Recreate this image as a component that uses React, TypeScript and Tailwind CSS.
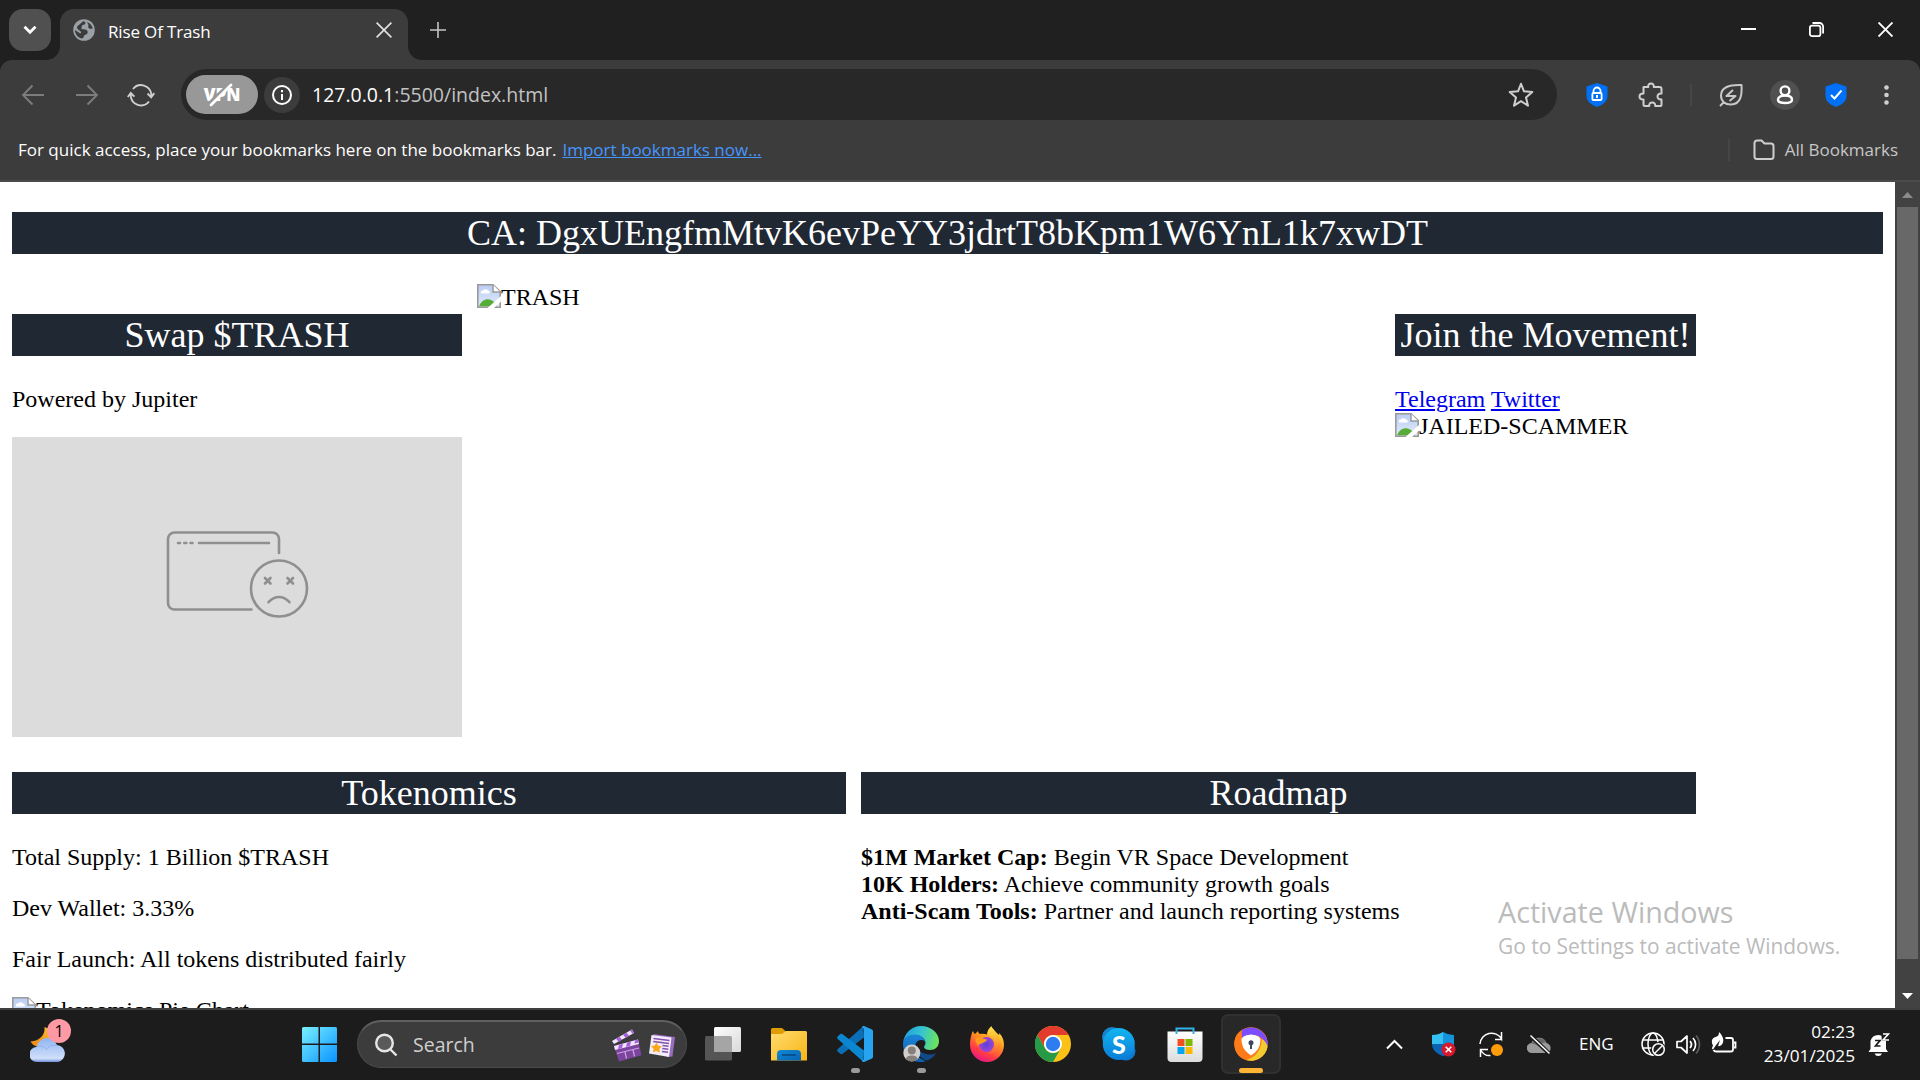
import React from "react";

function BrokenImage({ alt }: { alt: string }) {
  return (
    <span className="flex h-[27px] items-start leading-[27px] whitespace-nowrap">
      <svg width="24" height="24" viewBox="0 0 24 24" className="shrink-0">
        <defs>
          <linearGradient id="sky" x1="0" y1="0" x2="0" y2="1">
            <stop offset="0" stopColor="#b9cdf3" />
            <stop offset="1" stopColor="#e1eafb" />
          </linearGradient>
        </defs>
        <path d="M.8.8H16L23.2 7.500V23.200H.8Z" fill="url(#sky)" />
        <path d="M4 9.500a2 2 0 0 1 2-3 3 3 0 0 1 5 0 2 2 0 0 1 1.500 3Z" fill="#fff" />
        <path d="M2 22.500C5 14.500 13 13 18 19L20 22.500Z" fill="#55ad38" />
        <path d="M.8 23.200V.8H16L23.200 7.500V23.200Z" fill="none" stroke="#9a9a9a" strokeWidth="1.600" />
        <path d="M16 .8V8h7.200" fill="#fff" stroke="#9a9a9a" strokeWidth="1.500" />
        <path d="M10.500 24 24 12v5.500L17 24Z" fill="#fff" />
      </svg>
      <span>{alt}</span>
    </span>
  );
}

function Heading({ children }: { children: React.ReactNode }) {
  return <h2 className="h-[42px] bg-[#202833] text-center text-[36px] leading-[43px] whitespace-nowrap text-white">{children}</h2>;
}

function TabStrip() {
  return (
    <div className="flex h-[60px] items-start bg-[#202020] pl-[9px]">
      <button className="mt-[9px] flex h-[42px] w-[42px] items-center justify-center rounded-[14px] bg-[#505050]">
        <svg width="14" height="10" viewBox="0 0 14 10" fill="none" stroke="#fff" strokeWidth="2.800"><path d="m1.500 1.800 5.500 5.500 5.500-5.500" /></svg>
      </button>
      <div className="relative mt-[9px] ml-[9px] flex h-[51px] w-[348px] items-start rounded-t-[14px] bg-[#3c3c3c] pl-[13px]">
        <svg className="absolute bottom-0 -left-[14px]" width="14" height="14"><path d="M14 0v14H0A14 14 0 0 0 14 0Z" fill="#3c3c3c" /></svg>
        <svg className="absolute -right-[14px] bottom-0" width="14" height="14"><path d="M0 0v14h14A14 14 0 0 1 0 0Z" fill="#3c3c3c" /></svg>
        <svg className="mt-[10px]" width="22" height="22" viewBox="0 0 22 22">
          <circle cx="11" cy="11" r="10.800" fill="#9aa0a6" />
          <path d="M10 2.200c2 .2 2.500 1 2.400 2-.1 1.300-1.500 1.600-2.700 1.800C8.500 6.200 9 8 8.500 8.700c-.5 1 .5 1.500 2 1.500 2.500 0 4.200.8 4.200 3 0 2-2 2.200-3 2.800-1 .7-.7 2-1.500 2.700-.8.600-1.500.8-2.200.6C4.500 18 2 15 2 11l4.500 3c1.500.8 2-.5 1.200-1.500C6.500 11 4 10.500 4 8.500c0-2 3-3 6-6.300ZM14 3c3 1 5 3.500 5.700 6.500-1.500.5-3.500.3-4.200-.8-.8-1.200.3-2.200-.2-3.200Z" fill="#3c3c3c" />
        </svg>
        <span className="mt-[11px] ml-[13px] text-[17px] leading-[24px] tracking-[-0.15px] whitespace-nowrap text-white">Rise Of Trash</span>
        <svg className="absolute top-[13px] left-[316px]" width="16" height="16" fill="none" stroke="#e3e3e3" strokeWidth="1.600"><path d="m.6.6 14.800 14.800M15.400.6.6 15.400" /></svg>
      </div>
      <svg className="mt-[22px] ml-[22px]" width="16" height="16" fill="none" stroke="#c4c4c4" strokeWidth="1.600"><path d="M8 0v16M0 8h16" /></svg>
      <div className="mt-[22px] mr-[27px] ml-auto flex gap-[54px] text-white">
        <svg className="-mr-[1px]" width="15" height="15"><path d="M0 7h15" stroke="#fff" strokeWidth="2" /></svg>
        <svg width="15" height="15" fill="none" stroke="#fff" strokeWidth="1.800"><rect x=".9" y="3.600" width="10.500" height="10.500" rx="2.200" /><path d="M3.500 1h7A3.600 3.600 0 0 1 14.100 4.600v7" /></svg>
        <svg width="15" height="15" fill="none" stroke="#fff" strokeWidth="1.900"><path d="m.5.5 14 14M14.500.5l-14 14" /></svg>
      </div>
    </div>
  );
}

function Shield({ children }: { children: React.ReactNode }) {
  return (
    <svg width="22" height="24" viewBox="0 0 22 24">
      <path d="M11 0 21.500 3.500V13c0 5-4 8.500-10.500 11C4.500 21.500.5 18 .5 13V3.500Z" fill="#0070f6" />
      {children}
    </svg>
  );
}

function Toolbar() {
  return (
    <div className="bg-[#202020]">
      <div className="flex h-[120px] flex-col rounded-t-[12px] bg-[#3c3c3c]">
        <div className="mt-[9px] flex h-[51px] items-center pl-[21px]">
          <svg width="24" height="24" viewBox="0 0 24 24" fill="none" stroke="#7c7c7c" strokeWidth="1.900"><path d="M23 12H2M11.500 2.500 2 12l9.500 9.500" /></svg>
          <svg className="ml-[30px]" width="24" height="24" viewBox="0 0 24 24" fill="none" stroke="#7c7c7c" strokeWidth="1.900"><path d="M1 12h21M12.500 2.500 22 12l-9.500 9.500" /></svg>
          <svg className="ml-[28px]" width="28" height="26" viewBox="0 0 28 26" fill="none" stroke="#cfcfcf" strokeWidth="1.900"><path d="M6 7a10.300 10.300 0 0 1 18.300 5.500V15M22 19.500A10.300 10.300 0 0 1 3.700 13.500V11M.8 15l3-4 3.600 3.600M20.500 11.500l3.700 3.800 3-4.200" /></svg>
          <div className="ml-[26px] flex h-[51px] w-[1376px] items-center rounded-full bg-[#282828] pl-[5px]">
            <div className="relative flex h-[39px] w-[72px] items-center justify-center rounded-full bg-[#989898]">
              <span className="text-[17px] leading-none font-extrabold text-white">VPN</span>
              <svg className="absolute top-[7px] left-[20px]" width="30" height="27" fill="none" strokeLinecap="round"><path d="M4 21 25 1" stroke="#989898" strokeWidth="4" /><path d="M5 23 25 3" stroke="#fff" strokeWidth="2.800" /></svg>
            </div>
            <div className="ml-[6px] flex h-9 w-9 items-center justify-center rounded-full bg-[#3c3c3c]">
              <svg width="20" height="20" fill="none" stroke="#fff" strokeWidth="2"><circle cx="10" cy="10" r="9" /><path d="M10 9v6M10 5v2.200" /></svg>
            </div>
            <span className="ml-[12px] text-[19.500px] leading-[28px] whitespace-nowrap text-[#c2c2c2]"><span className="text-white">127.0.0.1</span>:5500/index.html</span>
            <svg className="mr-[23px] ml-auto" width="26" height="26" viewBox="0 0 26 26" fill="none" stroke="#cfcfcf" strokeWidth="2" strokeLinejoin="round"><path d="m13 1.800 3 7.500 8.300.7-6.300 5.500 2 8.200-7-4.500-7 4.500 2-8.200L1.700 10l8.300-.7Z" /></svg>
          </div>
          <div className="flex flex-1 items-center pl-[29px]">
            <Shield><path d="M7.500 10V8a3.500 3.500 0 0 1 7 0v2" fill="none" stroke="#fff" strokeWidth="1.800" /><rect x="6.400" y="10" width="9.200" height="7" rx="1" fill="none" stroke="#fff" strokeWidth="1.800" /><path d="M11 12v3" stroke="#fff" strokeWidth="2" /></Shield>
            <svg className="ml-[30px]" width="26" height="26" viewBox="0 0 26 26" fill="none" stroke="#cfcfcf" strokeWidth="2" strokeLinejoin="round"><path d="M5.500 5h4.800C9.800 2.800 11.300 1.500 13 1.500S16.200 2.800 15.700 5h5.800c1.200 0 2 .8 2 2v4.500c-2.500-.2-4 1-4 3s1.500 3.200 4 3V23c0 .6-.4 1-1 1h-5.300c.2-2.200-1-3.500-3-3.500s-3.200 1.300-3 3.500H7c-1 0-1.500-.5-1.500-1.500v-5C3 17.500 1.500 16.300 1.500 14.500s1.500-3 4-3Z" /></svg>
            <span className="ml-[26px] h-[22px] w-[2px] bg-[#464646]" />
            <svg className="ml-[27px]" width="24" height="24" viewBox="0 0 24 24" fill="none" stroke="#c8c8c8" strokeWidth="2" strokeLinejoin="round"><path d="M22.500 2c.5 8 .3 19-10.500 19.500C6 21.700 2 18 2 12.500 2 5 9 1.500 22.500 2ZM1 23l4-4M14 7l-6.500 6h9L10.500 18" /></svg>
            <span className="ml-[27px] flex h-[30px] w-[30px] items-center justify-center rounded-full bg-[#505050]">
              <svg width="18" height="20" fill="none" stroke="#fff" strokeWidth="2.400"><circle cx="9" cy="5.800" r="4.400" /><path d="M9 10.500c4.500 0 7 1.800 7 4.300 0 2-2.500 3.200-7 3.200s-7-1.200-7-3.200c0-2.500 2.500-4.300 7-4.300Z" /></svg>
            </span>
            <span className="ml-[25px]"><Shield><path d="m6 12 3.500 3.500 7-8" fill="none" stroke="#fff" strokeWidth="2" /></Shield></span>
            <svg className="ml-[37px]" width="5" height="20" fill="#cfcfcf"><circle cx="2.500" cy="2.500" r="2.300" /><circle cx="2.500" cy="10" r="2.300" /><circle cx="2.500" cy="17.500" r="2.300" /></svg>
          </div>
        </div>
        <div className="flex h-[59px] items-center pl-[18px] text-[17px] leading-[24px] whitespace-nowrap text-white">
          <span>For quick access, place your bookmarks here on the bookmarks bar.</span>
          <a className="ml-[6px] text-[#4596ff] underline">Import bookmarks now...</a>
          <span className="ml-auto h-[22px] w-[2px] bg-[#464646]" />
          <svg className="ml-[23px]" width="22" height="22" fill="none" stroke="#cfcfcf" strokeWidth="2"><path d="M4 1.500h4.500l3 3H18A2.500 2.500 0 0 1 20.500 7v10.500A2.500 2.500 0 0 1 18 20H4a2.500 2.500 0 0 1-2.500-2.500V4A2.500 2.500 0 0 1 4 1.500Z" /></svg>
          <span className="mr-[22px] ml-[10px] text-[#c7c7c7]">All Bookmarks</span>
        </div>
      </div>
    </div>
  );
}

function SadTab() {
  return (
    <div className="mt-6 flex h-[300px] justify-center bg-[#dcdcdc]">
      <svg className="mt-[90px] ml-[1px]" width="150" height="94" viewBox="0 0 150 94" fill="none" stroke="#8f8f8f" strokeWidth="2.600" strokeLinecap="round">
        <path d="M116 26V12a6.500 6.500 0 0 0-6.500-6.500h-98A6.500 6.500 0 0 0 5 12v64a6.500 6.500 0 0 0 6.500 6.500H88.500" />
        <path d="M36 16h70M15 16h2M21.300 16h2M27.500 16h2" />
        <circle cx="116" cy="61.500" r="28" />
        <path d="m102 51 5.500 5.500M107.500 51l-5.500 5.500M124.500 51l5.500 5.500M130 51l-5.500 5.500" />
        <path d="M105.500 75.200c6-7 15-7 21 0" />
      </svg>
    </div>
  );
}

function Page() {
  return (
    <main className="relative min-w-0 flex-1 overflow-hidden bg-white px-3 pt-[30px] font-['Liberation_Serif',serif] text-[24px] leading-[27px] text-black">
      <Heading>CA: DgxUEngfmMtvK6evPeYY3jdrtT8bKpm1W6YnL1k7xwDT</Heading>
      <div className="mt-[30px] grid w-[1684px] grid-cols-[450px_903px_301px] gap-[15px]">
        <section className="pt-[30px]">
          <Heading>Swap $TRASH</Heading>
          <p className="mt-[30px]">Powered by Jupiter</p>
          <SadTab />
        </section>
        <BrokenImage alt="TRASH" />
        <section className="pt-[30px]">
          <Heading>Join the Movement!</Heading>
          <p className="mt-[30px] text-[#0000ee]"><a className="underline">Telegram</a> <a className="underline">Twitter</a></p>
          <BrokenImage alt="JAILED-SCAMMER" />
        </section>
      </div>
      <div className="mt-[35px] grid w-[1684px] grid-cols-[834px_835px] gap-[15px]">
        <section>
          <Heading>Tokenomics</Heading>
          <div className="mt-[30px] flex flex-col gap-6">
            <p>Total Supply: 1 Billion $TRASH</p>
            <p>Dev Wallet: 3.33%</p>
            <p>Fair Launch: All tokens distributed fairly</p>
            <BrokenImage alt="Tokenomics Pie Chart" />
          </div>
        </section>
        <section>
          <Heading>Roadmap</Heading>
          <ul className="mt-[30px]">
            <li><b>$1M Market Cap:</b> Begin VR Space Development</li>
            <li><b>10K Holders:</b> Achieve community growth goals</li>
            <li><b>Anti-Scam Tools:</b> Partner and launch reporting systems</li>
          </ul>
        </section>
      </div>
      <div className="absolute top-[710px] left-[1498px] font-['Open_Sans',sans-serif] whitespace-nowrap text-[#bbbbbb]">
        <p className="text-[28.700px] leading-[40px]">Activate Windows</p>
        <p className="text-[20.900px] leading-[28px]">Go to Settings to activate Windows.</p>
      </div>
    </main>
  );
}

function Scrollbar() {
  return (
    <div className="flex h-full w-[25px] flex-col items-center bg-[#424242]">
      <svg className="mt-[10px]" width="11" height="6"><path d="M5.500 0 11 6H0Z" fill="#8b8b8b" /></svg>
      <div className="mt-[9px] h-[752px] w-[21px] bg-[#686868]" />
      <svg className="mt-[34px]" width="11" height="6"><path d="M5.500 6 11 0H0Z" fill="#fff" /></svg>
    </div>
  );
}

function AppSlot({ children, mark }: { children: React.ReactNode; mark?: boolean }) {
  return (
    <div className="relative flex h-[60px] w-[66px] items-center justify-center">
      {children}
      {mark && <span className="absolute bottom-[1px] h-[5px] w-[9px] rounded-full bg-[#9a9a9a]" />}
    </div>
  );
}

function Weather() {
  return (
    <div className="relative h-[36px] w-[36px]">
      <svg width="36" height="44" viewBox="0 0 36 44">
        <defs>
          <linearGradient id="cl" x1="0" y1="0" x2="0" y2="1"><stop offset="0" stopColor="#8fb4f2" /><stop offset=".85" stopColor="#d0dffa" /><stop offset="1" stopColor="#6f8fdc" /></linearGradient>
          <linearGradient id="mo" x1="1" y1="0" x2="0" y2="1"><stop offset="0" stopColor="#fcc02d" /><stop offset="1" stopColor="#ee8412" /></linearGradient>
        </defs>
        <path d="M14.500 8c1 8-5 14-14 14.500C4 29 14 30 20 25s5-14-5.500-17Z" fill="url(#mo)" />
        <path d="M7 43a7.500 7.500 0 0 1-.3-15A10.500 10.500 0 0 1 27 26a8.600 8.600 0 0 1 1 17Z" fill="url(#cl)" />
        <path d="M6.500 27.500c4-1.500 8 0 10 3 2-3.500 6-5 10-4" fill="none" stroke="#86a8e8" strokeWidth="1" opacity=".7" />
      </svg>
      <span className="absolute top-0 left-[17px] flex h-6 w-6 items-center justify-center rounded-full bg-[#ff99a4] text-[16px] text-black">1</span>
    </div>
  );
}

function SearchBox() {
  return (
    <div className="flex h-12 w-[330px] items-center rounded-full border border-t-2 border-[#4a4a4a] border-t-[#606060] bg-[#3c3c3c] pl-[16px] text-[#cfcfcf]">
      <svg width="24" height="24" viewBox="0 0 24 24" fill="#5a5a5a" stroke="#e6e6e6" strokeWidth="2.400"><circle cx="10.500" cy="10" r="8.300" /><path d="m16.500 16.500 6 6" /></svg>
      <span className="ml-[15px] text-[19.500px]">Search</span>
      <svg className="mr-[6px] ml-auto" width="31" height="34" viewBox="0 0 31 34">
        <path d="M1 13 21 1.500l2 3.500L3 16Z" fill="#f1e6fb" />
        <path d="m5 10.700 3.500-2 2.500 3-3.500 2ZM12 6.700l3.500-2 2.500 3-3.500 2ZM19 2.600l2-1.100 2 3.500-1.500.8Z" fill="#a760dc" />
        <path d="M3 18 27 11.500l3.500 15.800L8 33.500Z" fill="#7c449f" />
        <path d="M3 18 27 11.500l1 4.500L4 22Z" fill="#f1e6fb" />
        <path d="m8 16.700 4-1-1 4.500-4 1ZM16 14.500l4-1-1 4.500-4 1ZM24 12.400l3-.9.500 3-4 1Z" fill="#a760dc" />
        <path d="m6 25.500 22-5.500M14 24l1.500 6.500M22 22l1.500 6.500" stroke="#c9a4e2" strokeWidth="1.200" />
      </svg>
      <svg className="mt-[3px] mr-[10px]" width="28" height="26" viewBox="0 0 28 26">
        <path d="m5 1 22 3-2.500 19.500-5 .5Z" fill="#9a6cc0" />
        <path d="m3.500 2 20 2.500L21 24 1 20.500Z" fill="#f3ecfa" />
        <path d="m5.500 5.500 16 2M5.200 8.500l15.800 2M14.500 12.500l6 .8M14.300 15.500l6 .8M14 18.500l6 .8" stroke="#8351ad" strokeWidth="1.500" />
        <path d="m8.500 9.500 1.600 3.200 3.700.6-2.500 2.800.5 3.700L8.300 18 5 19.300l.6-3.600L3 13l3.700-.4Z" fill="#fca715" />
      </svg>
    </div>
  );
}

function Edge() {
  return (
    <svg width="36" height="36" viewBox="0 0 36 36">
      <defs>
        <linearGradient id="e1" x1="0" y1=".3" x2="1" y2=".5"><stop offset="0" stopColor="#1f9de0" /><stop offset=".5" stopColor="#35c5cf" /><stop offset="1" stopColor="#6fe45a" /></linearGradient>
        <linearGradient id="e2" x1="0" y1="0" x2="0" y2="1"><stop offset="0" stopColor="#1b86d8" /><stop offset="1" stopColor="#0f5cb0" /></linearGradient>
      </defs>
      <path d="M0 17C1 7 9 0 18 0c10 0 18 7 18 15 0 6-4 9-9 9-4 0-6-1.500-6-3 0-1 1.500-1.500 1.500-4C22.500 12 17 9 12 9 6 9 1 12 0 17Z" fill="url(#e1)" />
      <path d="M0 18C0 12 6 8.500 12 8.500c6 0 10 4 10 8-.5-2-2-2.500-4-2.500-4 0-6.500 4-6 9 .6 6.500 6 11 11 12-2 1-4 1-6 1C7 36 0 28 0 18Z" fill="url(#e2)" />
      <path d="M14 19c-1.500 8 4 14 10 15.500 4-1 8-5 9-7.500-2 1-4 1.500-6.500 1.500C20 28.500 15 25 14 19Z" fill="#114a8b" />
      <circle cx="8.800" cy="27" r="8.500" fill="#d2cfcc" /><circle cx="8.800" cy="24.500" r="4" fill="#85807c" /><path d="M3 33.200c0-2.500 2.500-3.700 5.800-3.700s5.800 1.200 5.800 3.700a8.500 8.500 0 0 1-11.600 0Z" fill="#85807c" />
    </svg>
  );
}

function Apps() {
  return (
    <>
      <AppSlot>
        <svg width="36" height="36" viewBox="0 0 36 36">
          <defs><linearGradient id="tv" x1="0" y1="0" x2="1" y2="1"><stop offset="0" stopColor="#fff" /><stop offset="1" stopColor="#d8d8d8" /></linearGradient></defs>
          <rect x="0" y="10" width="27" height="24.500" rx="1.500" fill="#555" /><rect x="9" y="1" width="27" height="25" rx="1.500" fill="url(#tv)" /><path d="M9 10h16.500a1.500 1.500 0 0 1 1.500 1.500V26H10.500A1.500 1.500 0 0 1 9 24.500Z" fill="#a5a5a5" />
        </svg>
      </AppSlot>
      <AppSlot>
        <svg width="36" height="36" viewBox="0 0 36 36">
          <defs><linearGradient id="fo" x1="0" y1="0" x2="1" y2="1"><stop offset="0" stopColor="#ffdc70" /><stop offset="1" stopColor="#f9b514" /></linearGradient><linearGradient id="fb" x1="0" y1="0" x2="1" y2="1"><stop offset="0" stopColor="#118ad6" /><stop offset="1" stopColor="#0763b4" /></linearGradient></defs>
          <path d="M0 3.500A1.500 1.500 0 0 1 1.500 2H11l4 3.500L12 8H0Z" fill="#df9c05" />
          <path d="M0 8h11l4-3h19.500A1.500 1.500 0 0 1 36 6.500v28H0Z" fill="url(#fo)" />
          <path d="M6 34.500V28a4 4 0 0 1 4-4h16a4 4 0 0 1 4 4v6.500Z" fill="url(#fb)" /><path d="M11 29h14" stroke="#0a4a85" strokeWidth="1.600" />
        </svg>
      </AppSlot>
      <AppSlot mark>
        <svg width="36" height="36" viewBox="0 0 36 36">
          <path d="M26.500 0 .8 23c-.9.900-.9 2 0 2.800l2.400 2c.8.600 1.600.6 2.400 0L27 11.500Z" fill="#0c6fb5" />
          <path d="M26.500 36 .8 13c-.9-.9-.9-2 0-2.800l2.400-2c.8-.6 1.600-.6 2.400 0L27 24.500Z" fill="#0b87d1" />
          <path d="M27 0 35 3.500c.6.300 1 .9 1 1.500v26c0 .6-.4 1.200-1 1.500L27 36c-1 .3-1.500-.2-2-1l2-2V3l-2-2c.5-.8 1-1.200 2-1Z" fill="#26a4ef" />
        </svg>
      </AppSlot>
      <AppSlot mark><Edge /></AppSlot>
      <AppSlot>
        <svg width="36" height="36" viewBox="0 0 36 36">
          <defs>
            <linearGradient id="f1" x1=".8" y1="0" x2=".3" y2="1"><stop offset="0" stopColor="#fff14d" /><stop offset=".4" stopColor="#ff9a1f" /><stop offset=".75" stopColor="#ff3b47" /><stop offset="1" stopColor="#e3168a" /></linearGradient>
            <linearGradient id="f3" x1="0" y1="0" x2="0" y2="1"><stop offset="0" stopColor="#ffe14a" /><stop offset=".5" stopColor="#ffae2b" /><stop offset="1" stopColor="#ff5a3a" /></linearGradient>
            <radialGradient id="f2"><stop offset="0" stopColor="#5b3fd6" /><stop offset="1" stopColor="#9a45d8" /></radialGradient>
          </defs>
          <path d="M3 7c0-1 .7-1.500 1-2 .6 1.500 1 2.500 2 3l3-3c.2 1.500.8 2.500 2 3 2-.5 5-.4 7 .5C18 5 20 2 22.500 0c.5 4 5 6 7.500 9 .3-.7.300-1.500.300-2C34 11 35 15 35 19a17 17 0 0 1-34 0c0-4 .5-8 2-12Z" fill="url(#f1)" />
          <circle cx="17.500" cy="18.500" r="7.500" fill="url(#f2)" />
          <path d="M6 12c3-1 6-1 8 .5l4 1c-.5 2.500-3 2.500-4.500 3.500-2 1.300-3.500.5-4.500 3-2-3-2.500-5-3-8Z" fill="#ff9a1f" />
          <path d="M19 9c4 1 7 5 7 10 0 4-3 8-8 8.500 6 1.500 12-1.500 13.500-8C32 14 29 8 22.500 1 19.500 3.500 18 6 19 9Z" fill="url(#f3)" />
        </svg>
      </AppSlot>
      <AppSlot>
        <svg width="36" height="36" viewBox="0 0 36 36">
          <circle cx="18" cy="18" r="18" fill="#fbc116" />
          <path d="M2.400 9A18 18 0 0 1 33.600 9H18a9 9 0 0 0-7.800 13.500Z" fill="#e33b2e" />
          <path d="M2.400 9 10.200 22.500A9 9 0 0 0 25.800 22.500L18 36A18 18 0 0 1 2.400 9Z" fill="#259b48" />
          <circle cx="18" cy="18" r="9" fill="#fff" /><circle cx="18" cy="18" r="7.200" fill="#2d7cf0" />
        </svg>
      </AppSlot>
      <AppSlot>
        <div className="relative flex h-[36px] w-[36px] items-center justify-center">
          <svg className="absolute inset-0" width="36" height="36" viewBox="0 0 36 36">
            <defs><linearGradient id="sk" x1="0" y1="0" x2="0" y2="1"><stop offset="0" stopColor="#12b5f0" /><stop offset="1" stopColor="#0a7cd8" /></linearGradient></defs>
            <circle cx="11" cy="11" r="10" fill="#1584cc" /><circle cx="25" cy="25" r="9.500" fill="#0d7ad0" /><circle cx="17.800" cy="18" r="16" fill="url(#sk)" />
          </svg>
          <span className="relative font-['Lato',sans-serif] text-[25px] leading-none font-black text-white">S</span>
        </div>
      </AppSlot>
      <AppSlot>
        <svg width="36" height="36" viewBox="0 0 36 36">
          <defs><linearGradient id="st" x1="0" y1="0" x2="0" y2="1"><stop offset="0" stopColor="#fff" /><stop offset="1" stopColor="#dcdcdc" /></linearGradient></defs>
          <path d="M.5 5.500h35V32a4 4 0 0 1-4 4h-27a4 4 0 0 1-4-4Z" fill="url(#st)" />
          <path d="M9.500 8V2.500h17V8" fill="none" stroke="#32b2e8" strokeWidth="2" />
          <path d="M10.500 13h7v7h-7Z" fill="#f25022" /><path d="M18.500 13h7v7h-7Z" fill="#7fba00" /><path d="M10.500 21h7v7h-7Z" fill="#00a4ef" /><path d="M18.500 21h7v7h-7Z" fill="#ffb900" />
        </svg>
      </AppSlot>
      <div className="relative ml-[3px] flex h-[60px] w-[60px] items-center justify-center rounded-[7px] border-2 border-[#303030] bg-[#282828]">
        <svg width="34" height="34" viewBox="0 0 34 34">
          <circle cx="17" cy="17" r="16.800" fill="#ff7a18" />
          <path d="M8 3A16.800 16.800 0 0 1 33.500 20C31 14 28 9.500 22 8.500 16 7.800 11 8.500 8.500 12 7 9 7 6 8 3Z" fill="#7c4dff" />
          <path d="M33.500 20A16.800 16.800 0 0 1 12 33c8-2 15-8 16-21 3 2 5 4.500 5.500 8Z" fill="#f2cc2e" />
          <path d="M8 3A16.800 16.800 0 0 0 12 33c-4-6-6-13-4-21 0-3-1-6 0-9Z" fill="#ff7a18" />
          <path d="M17 7.500C21 7.800 25 9 26.500 12c0 8-3 12-9.500 16.500C10.500 24 7.500 19.500 7.500 12 9 9 13 7.800 17 7.500Z" fill="#fff" />
          <circle cx="17" cy="15.800" r="2.500" fill="#3b4763" /><path d="M17 16v6" stroke="#3b4763" strokeWidth="2" />
        </svg>
        <span className="absolute -bottom-[1px] h-[5px] w-6 rounded-full bg-[#ffb436]" />
      </div>
    </>
  );
}

function Tray() {
  return (
    <div className="ml-[105px] flex flex-1 items-center text-white">
      <svg width="17" height="11" fill="none" stroke="#fff" strokeWidth="2"><path d="m1 9.500 7.500-7.500L16 9.500" /></svg>
      <svg className="ml-[29px]" width="24" height="25" viewBox="0 0 24 25">
        <path d="M11 0c3 2 7 3 11 3v9c0 6-5 10-11 12Z" fill="#0a74c9" /><path d="M11 0C8 2 4 3 0 3v9h11Z" fill="#35c0f0" /><path d="M11 0c3 2 7 3 11 3v9H11Z" fill="#1594dd" /><path d="M0 12c0 6 5 10 11 12V12Z" fill="#0b63b2" />
        <circle cx="16.500" cy="17.500" r="7" fill="#d7192b" /><path d="m13.700 14.700 5.600 5.600M19.300 14.700l-5.600 5.600" stroke="#fff" strokeWidth="1.600" />
      </svg>
      <svg className="ml-[23px]" width="25" height="25" viewBox="0 0 25 25" fill="none" stroke="#fff" strokeWidth="1.500"><path d="M1 12A11.500 11.500 0 0 1 22.500 7V0M22.500 7.500H16M9 17.500H1.500V25M2 18.500C4 22 8 24 11.500 23.500" /><circle cx="18" cy="18" r="6" fill="#ff9c0a" stroke="none" /></svg>
      <svg className="ml-[23px]" width="25" height="21" viewBox="0 0 25 21"><path d="M5 19a5 5 0 0 1-.5-10A8 8 0 0 1 19.500 9 5.200 5.200 0 0 1 20 19Z" fill="#9a9a9a" /><path d="M5 10A7.800 7.800 0 0 1 19.500 8.500C15 8.500 12.500 10.500 12 13 10 10.500 8 9.700 5 10Z" fill="#686868" /><path d="m3.500 1.500 19 18.500" stroke="#1c1c1c" strokeWidth="4" /><path d="m3.500 1.500 19 18" stroke="#fff" strokeWidth="1.500" /></svg>
      <span className="ml-[27px] text-[17px]">ENG</span>
      <div className="ml-[27px] flex items-center gap-[10px]">
        <svg width="25" height="25" viewBox="0 0 25 25" fill="none" stroke="#fff" strokeWidth="1.500"><circle cx="12" cy="12" r="11" /><ellipse cx="12" cy="12" rx="5" ry="11" /><path d="M1.500 8h21M1.500 16h14" /><circle cx="17.500" cy="17.500" r="7.500" fill="#1c1c1c" stroke="none" /><circle cx="17.500" cy="17.500" r="5.800" /><path d="m13.500 21.500 8-8" /></svg>
        <svg width="25" height="21" viewBox="0 0 25 21" fill="none" stroke="#fff" strokeWidth="1.700"><path d="M1 7.500v6h4l6 5.500V2L5 7.500Z" strokeLinejoin="round" /><path d="M14 7a5.500 5.500 0 0 1 0 7M17 4a9.500 9.500 0 0 1 0 13" /><path d="M20 1.500a13.500 13.500 0 0 1 0 18" stroke="#5c5c5c" /></svg>
        <svg className="-mt-[4px]" width="26" height="21" viewBox="0 0 26 21" fill="none" stroke="#fff" strokeWidth="1.800"><path d="M14.500 6h5.500a2 2 0 0 1 2 2v9.500a2 2 0 0 1-2 2H5a3 3 0 0 1-2.500-1.500M23 10.500h1.500v5H23" /><path d="M8 0c3.500 3.500 5 7 4 10.500-.8 2.500-2.500 3.700-5 3.700L9 8l-5 6.500L2 17.500.8 16.500 2 13.500C-.5 9 1 5.500 6 4.500 7.500 4 8 2 8 0Z" fill="#fff" stroke="none" /></svg>
      </div>
      <div className="ml-auto flex flex-col items-end text-[17.200px] leading-[24px] whitespace-nowrap">
        <span>02:23</span><span>23/01/2025</span>
      </div>
      <svg className="mr-[30px] ml-[13px]" width="22" height="25" viewBox="0 0 22 25"><path d="M2.500 17V9a8 8 0 0 1 15.500 0v8l2 3H.5Z" fill="#fff" /><path d="M6.500 21.500h7.500a4 4 0 0 1-7.500 0Z" fill="#fff" /><path d="M7 8.500h5L7.500 14H12.500" fill="none" stroke="#1c1c1c" strokeWidth="1.700" /><path d="M13 0h9v9h-8Z" fill="#1c1c1c" /><path d="M15 2h5.500l-5.500 6H21" fill="none" stroke="#fff" strokeWidth="1.600" /></svg>
    </div>
  );
}

function Taskbar() {
  return (
    <footer className="flex h-[72px] items-center border-t-2 border-[#404040] bg-[#1c1c1c] pb-[2px] pl-[30px]">
      <div className="-mt-[15px]"><Weather /></div>
      <svg className="ml-[236px]" width="35" height="35" viewBox="0 0 35 35">
        <defs><linearGradient id="wn" gradientUnits="userSpaceOnUse" x1="0" y1="0" x2="35" y2="35"><stop offset="0" stopColor="#78f0ff" /><stop offset="1" stopColor="#0b93ff" /></linearGradient></defs>
        <path d="M0 1.500Q0 0 1.500 0h15v16.500H0ZM18 0h15.500Q35 0 35 1.500v15H18ZM0 18h16.500v17h-15Q0 35 0 33.500ZM18 18h17v15.500q0 1.500-1.500 1.500H18Z" fill="url(#wn)" />
      </svg>
      <div className="ml-[20px]"><SearchBox /></div>
      <div className="ml-[3px] flex"><Apps /></div>
      <Tray />
    </footer>
  );
}

export default function App() {
  return (
    <div className="flex h-[1080px] w-[1920px] flex-col overflow-hidden font-['Open_Sans',sans-serif]">
      <TabStrip />
      <Toolbar />
      <div className="h-[2px] bg-[#4b4b4b]" />
      <div className="flex min-h-0 flex-1">
        <Page />
        <Scrollbar />
      </div>
      <Taskbar />
    </div>
  );
}
